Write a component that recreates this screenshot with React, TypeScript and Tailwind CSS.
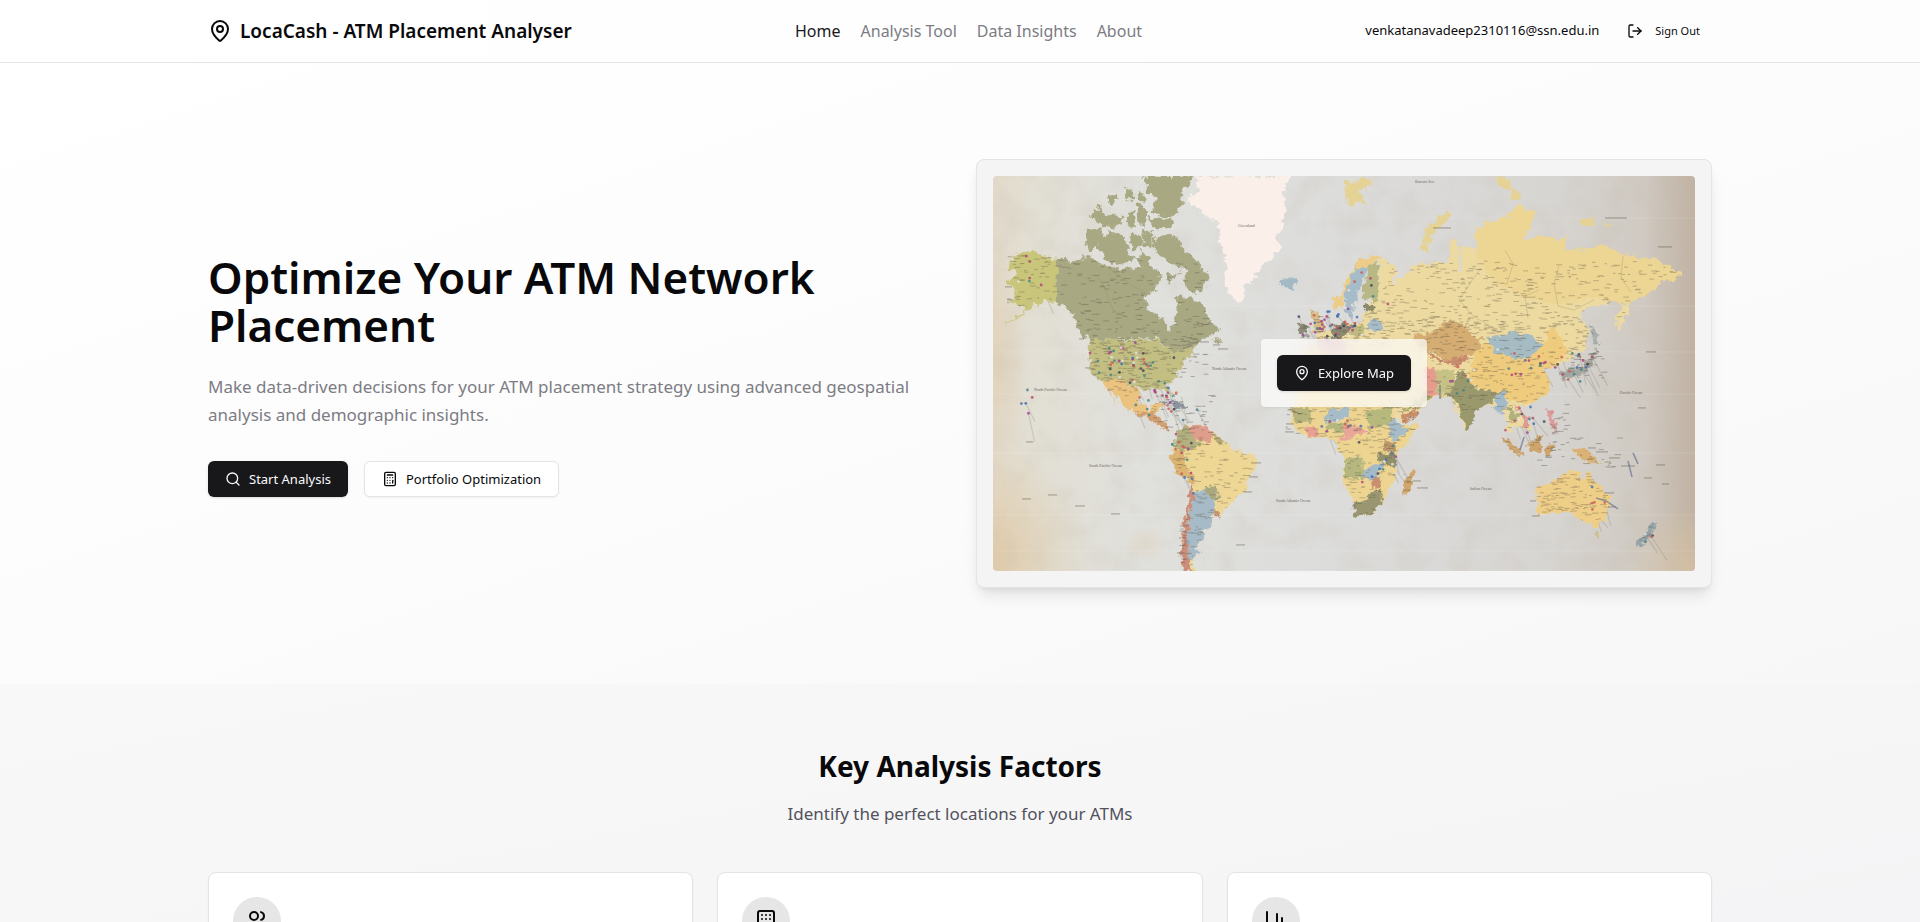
import { Building, Calculator, ChartColumn, LogOut, MapPin, Search, Users } from "lucide-react";

const LANDS: [string, string][] = [
  // North America
  ["#c9c67c", "35,75 49,80 64,82 64,126 52,124 40,131 27,141 12,149 30,137 34,131 17,127 24,117 13,104 24,99 15,91 20,81"],
  ["#a8a883", "64,82 77,86 94,80 110,89 127,93 144,92 157,91 169,97 164,111 152,122 154,132 170,144 177,156 181,147 185,137 184,119 199,122 210,131 217,144 226,154 215,160 207,166 194,174 177,176 164,162 97,164 87,156 80,137 64,126"],
  ["#c3bf83", "96,164 164,164 177,176 194,174 204,169 190,187 186,198 174,210 179,221 172,213 149,214 142,208 118,206 106,203 98,198 96,175"],
  ["#ebc37f", "110,205 120,204 134,206 144,212 147,227 157,234 165,227 170,229 160,239 144,237 129,229 120,214 117,217 124,227 114,214"],
  ["#d2a070", "144,236 160,237 172,247 177,256 169,252 160,244 145,240"],
  ["#8b939c", "164,228 180,224 190,229 195,233 183,231 176,228"],
  ["#a8a883", "149,0 199,0 189,17 187,31 180,41 164,39 159,34 164,24 154,17 154,7"],
  ["#a8a883", "155,42 179,43 177,52 159,52"],
  ["#a8a883", "132,12 140,14 140,24 134,24"],
  ["#a8a883", "144,16 150,17 152,26 145,24"],
  ["#a8a883", "114,24 124,17 120,29"],
  ["#a8a883", "99,39 107,29 110,41 129,39 130,47 114,52 104,46"],
  ["#a8a883", "134,39 140,34 142,49 134,51"],
  ["#a8a883", "145,26 154,34 150,51 145,41"],
  ["#a8a883", "94,54 109,52 110,62 100,74 93,72"],
  ["#a8a883", "105,64 117,56 132,61 135,77 144,84 120,89 107,77"],
  ["#a8a883", "137,57 147,59 149,71 139,74"],
  ["#a8a883", "149,54 160,57 159,71 150,71"],
  ["#a8a883", "147,74 157,81 154,94 145,87"],
  ["#a8a883", "164,59 185,61 190,74 204,84 214,99 209,117 199,116 190,106 194,94 177,87 164,77 160,67"],
  ["#a8a883", "172,96 184,101 190,92 177,107"],
  ["#a8a883", "220,161 231,164 226,169"],
  ["#fbefe9", "204,0 297,0 290,17 292,34 289,47 287,57 282,64 289,71 279,82 269,91 259,102 252,111 249,126 244,126 235,116 232,101 234,84 227,71 227,54 222,44 210,39 195,24 207,11"],
  ["#a3b9c6", "285,106 297,100 305,106 302,112 290,111"],
  // South America
  ["#eed795", "184,254 194,249 210,249 224,259 234,266 235,272 264,282 262,294 254,304 252,317 240,322 234,331 227,340 220,341 219,349 210,354 209,364 204,367 205,376 199,386 202,395 190,395 188,381 192,344 197,321 197,306 184,297 177,281 184,267"],
  ["#a6bbc7", "201,317 211,314 224,322 219,334 219,349 210,354 209,364 204,367 205,376 199,386 194,386 195,350"],
  ["#b2b07e", "184,254 194,249 202,262 209,268 190,275 180,272"],
  ["#dcb573", "180,275 192,275 190,285 200,300 205,310 197,306 184,297 177,281"],
  ["#df9d8b", "193,250 210,249 222,258 215,267 202,262"],
  ["#b5a873", "222,259 234,266 226,268"],
  ["#a9a87e", "213,308 222,312 226,322 220,324 212,314"],
  ["#c88f6f", "220,333 228,336 226,341 220,340"],
  ["#cb8d7c", "197,306 201,317 195,345 194,386 200,395 190,395 188,381 192,344 197,321"],
  // Eurasia
  ["#eddaa0", "387,81 405,94 399,109 414,97 422,89 444,86 457,87 457,67 464,64 465,81 464,97 469,94 467,71 480,71 485,77 482,57 494,46 514,42 524,29 542,37 540,49 527,66 550,59 567,64 572,59 574,74 594,74 607,69 627,77 640,82 660,82 677,91 687,99 682,106 667,102 665,112 647,122 635,127 635,137 625,154 623,141 634,124 627,119 614,129 597,129 585,141 597,154 592,171 580,181 570,187 562,190 550,194 557,204 555,217 539,227 524,231 529,241 539,249 537,256 522,249 519,257 514,251 512,237 504,229 492,229 480,237 472,254 467,241 457,222 444,219 437,222 424,237 409,246 397,231 385,215 370,212 360,200 345,178 335,192 308,192 310,172 328,168 322,160 335,155 352,148 370,145 376,127 384,116"],
  ["#edd593", "482,57 494,46 514,42 524,29 542,37 540,49 527,66 550,59 567,64 572,59 574,74 594,74 607,69 627,77 640,82 660,82 677,91 687,99 682,106 667,102 665,112 647,122 635,127 600,122 560,128 530,120 500,105 486,84"],
  ["#b8b886", "374,89 385,87 384,116 384,126 370,122 369,112 375,102"],
  ["#a6bcc8", "362,92 374,89 372,102 364,116 362,129 357,141 352,136 352,119 357,104"],
  ["#edcc88", "347,122 355,102 364,86 384,79 390,82 374,89 362,92 352,119 349,131 340,134 340,122"],
  ["#d9bd85", "317,134 325,136 329,146 332,156 319,157 322,147"],
  ["#8f8d7a", "306,148 314,148 314,157 306,156"],
  ["#8f8b72", "342,148 354,147 356,158 344,162 339,155"],
  ["#bdb980", "356,148 370,148 372,157 358,160"],
  ["#d8a5a8", "325,164 348,162 356,172 344,184 328,178"],
  ["#a6bcc8", "374,147 382,142 390,149 385,156 375,154"],
  ["#8d8a6c", "373,129 382,129 381,134 373,134"],
  ["#d5ad72", "420,159 440,157 444,151 459,144 475,151 477,159 490,162 484,176 470,179 454,186 440,174 434,176 424,167"],
  ["#efcb7e", "484,176 494,165 504,177 524,182 537,181 552,168 556,152 566,157 575,175 562,190 550,194 557,204 555,217 539,227 520,225 505,218 490,213 476,205 478,190"],
  ["#a5bcc4", "494,162 512,159 517,155 530,159 539,159 544,167 552,168 537,181 524,182 504,177"],
  ["#9a996d", "455,214 467,196 475,201 482,212 500,217 512,214 510,222 495,226 482,237 477,252 474,254 467,236 464,226 454,221"],
  ["#a3bac8", "504,219 512,216 515,229 510,239 500,234"],
  ["#b0b080", "515,229 524,237 522,246 517,243"],
  ["#dc9b94", "521,228 526,232 537,246 534,254 529,250 531,242"],
  ["#c98b6d", "434,176 454,186 470,179 477,182 464,191 440,182"],
  ["#e59c8c", "430,192 443,194 445,218 434,222"],
  ["#c6c185", "443,194 462,194 458,215 445,220"],
  ["#aaa66c", "437,222 424,230 410,235 430,217"],
  ["#c88f6b", "409,239 425,234 427,239 410,246"],
  ["#e5d295", "427,71 434,51 457,35 459,39 439,57 434,77"],
  ["#e5d295", "352,7 361,4 364,9 367,3 379,2 380,9 367,14 372,29 365,25 357,32"],
  ["#e5d295", "502,0 517,4 518,15 510,14"],
  ["#e5d295", "520,12 527,18 526,22 518,23"],
  ["#e5d295", "587,44 600,42 601,49 589,50"],
  ["#e5d295", "608,46 618,48 612,50"],
  ["#a5a69f", "567,195 577,193 590,190 598,178 604,174 600,186 594,198 578,202 568,205"],
  ["#a7adad", "597,150 604,158 606,170 601,166"],
  // Africa
  ["#edd591", "299,232 310,205 340,198 350,205 375,208 395,212 400,232 405,249 425,249 415,266 404,276 400,286 404,302 394,312 394,319 387,327 379,339 364,340 360,326 350,302 354,282 345,276 344,266 334,261 314,262 300,249 297,242"],
  ["#b6b37c", "299,233 316,232 320,246 304,247"],
  ["#a6bcc8", "337,234 357,232 355,242 330,246"],
  ["#b4b680", "335,246 354,247 350,257 335,254"],
  ["#e7a092", "314,251 325,252 324,261 314,261"],
  ["#e9a597", "352,251 359,248 377,256 362,260 347,266"],
  ["#b6b87e", "370,236 399,231 397,249 377,252"],
  ["#a6bcc8", "394,247 402,242 409,252 417,256 400,264"],
  ["#92906a", "384,277 404,279 402,291 387,286"],
  ["#bd986a", "392,264 404,266 400,277 390,275"],
  ["#b5b77f", "354,282 369,282 370,302 352,302"],
  ["#a3bac8", "370,294 390,287 384,304 370,302"],
  ["#c88f6f", "380,302 389,304 387,312 379,311"],
  ["#999671", "360,327 370,327 380,314 389,314 387,327 379,339 362,340"],
  ["#d1a66b", "412,301 420,294 421,301 415,319 410,317"],
  // Oceania
  ["#efcf88", "542,311 554,309 569,299 577,294 585,297 589,306 595,294 602,306 615,317 617,327 614,341 604,351 592,347 577,336 560,337 545,339 545,327"],
  ["#cdbd85", "600,358 608,357 605,362"],
  ["#96a4a7", "657,347 664,349 660,357 647,371 642,369 654,357"],
  ["#dab274", "577,272 594,274 607,289 590,284"],
  ["#cfa56e", "534,267 549,259 547,277 537,276"],
  ["#cfa56e", "507,259 527,274 530,282 517,272"],
  ["#cfa56e", "553,270 561,268 557,280 553,279"],
  ["#dd9d9d", "554,234 559,235 564,257 558,248"],
];

const PIN_COLORS = ["#b0406f", "#3d8389", "#3f6db0", "#cb5a55", "#3f4058", "#3d8389", "#9d4293", "#e4e4e4"];

// Pin clusters: centre x, centre y, spread x, spread y, count
const CLUSTERS: [number, number, number, number, number][] = [
  [40, 95, 20, 22, 6],
  [142, 186, 50, 28, 44],
  [166, 226, 42, 22, 28],
  [190, 265, 14, 18, 9],
  [196, 305, 10, 26, 6],
  [340, 149, 38, 18, 44],
  [375, 120, 30, 32, 8],
  [350, 250, 45, 12, 10],
  [385, 292, 24, 30, 12],
  [470, 205, 22, 24, 9],
  [535, 190, 44, 28, 16],
  [530, 245, 22, 22, 12],
  [582, 190, 20, 18, 18],
  [600, 325, 14, 18, 5],
  [655, 360, 14, 10, 4],
  [34, 226, 9, 14, 5],
];

// Areas dotted with place-name marks: x, y, width, height, count
const LABEL_AREAS: [number, number, number, number, number][] = [
  [14, 76, 50, 60, 45],
  [66, 84, 150, 90, 230],
  [90, 164, 125, 52, 260],
  [105, 205, 95, 55, 90],
  [176, 250, 90, 145, 260],
  [304, 134, 90, 64, 240],
  [385, 85, 300, 70, 400],
  [385, 145, 215, 90, 500],
  [296, 228, 134, 112, 370],
  [505, 228, 105, 60, 130],
  [540, 295, 78, 56, 140],
  [640, 345, 28, 28, 24],
];

// Coastal place names that run out over the sea
const COAST_AREAS: [number, number, number, number, number][] = [
  [160, 218, 60, 36, 34],
  [186, 176, 32, 26, 14],
  [300, 140, 36, 40, 22],
  [292, 232, 14, 30, 12],
  [575, 172, 34, 30, 26],
  [556, 226, 16, 34, 14],
  [536, 262, 90, 30, 34],
  [186, 340, 10, 50, 12],
  [12, 80, 20, 50, 9],
];

const OCEANS: [string, number, number][] = [
  ["North Pacific Ocean", 41, 215],
  ["South Pacific Ocean", 96, 291],
  ["North Atlantic Ocean", 219, 194],
  ["South Atlantic Ocean", 283, 326],
  ["Indian Ocean", 477, 314],
  ["Pacific Ocean", 627, 218],
  ["Greenland", 245, 51],
  ["Barents Sea", 422, 7],
];

function sequence(seed: number) {
  let s = seed;
  return () => {
    s = (s * 16807) % 2147483647;
    return s / 2147483647;
  };
}

function markPath(areas: [number, number, number, number, number][], rand: () => number) {
  return areas
    .flatMap(([x, y, w, h, n]) =>
      Array.from({ length: n }, () => {
        const mx = x + rand() * w;
        const my = y + rand() * h;
        return `M${mx.toFixed(1)} ${my.toFixed(1)}l${(2 + rand() * 5).toFixed(1)} ${(rand() * 0.6 - 0.3).toFixed(1)}`;
      }),
    )
    .join("");
}

function WorldMap() {
  const rand = sequence(4217);
  const marks = markPath(LABEL_AREAS, rand);
  const coastMarks = markPath(COAST_AREAS, rand);
  const pins = CLUSTERS.flatMap(([cx, cy, sx, sy, n]) =>
    Array.from({ length: n }, () => ({
      x: cx + (rand() + rand() - 1) * sx,
      y: cy + (rand() + rand() - 1) * sy,
      color: PIN_COLORS[Math.floor(rand() * PIN_COLORS.length)],
    })),
  );
  return (
    <svg viewBox="0 0 702 395" preserveAspectRatio="xMidYMid slice" className="block h-full w-full" role="img" aria-label="World map">
      <defs>
        <linearGradient id="sea" x1="0" x2="1" y1="0" y2="0">
          <stop offset="0" stopColor="#e3dacb" />
          <stop offset="0.06" stopColor="#e2dfd4" />
          <stop offset="0.2" stopColor="#e0e0dc" />
          <stop offset="0.5" stopColor="#dcdcdb" />
          <stop offset="0.8" stopColor="#d7d5d2" />
          <stop offset="0.93" stopColor="#cfc9c1" />
          <stop offset="1" stopColor="#c1b2a3" />
        </linearGradient>
        <radialGradient id="stain">
          <stop offset="0" stopColor="#dfc7a1" stopOpacity="0.75" />
          <stop offset="1" stopColor="#dfc7a1" stopOpacity="0" />
        </radialGradient>
        <filter id="coast" x="-2%" y="-2%" width="104%" height="104%">
          <feTurbulence type="fractalNoise" baseFrequency="0.16" numOctaves="3" seed="8" />
          <feDisplacementMap in="SourceGraphic" scale="10" xChannelSelector="R" yChannelSelector="G" />
        </filter>
        <filter id="paper" x="0" y="0" width="100%" height="100%">
          <feTurbulence type="fractalNoise" baseFrequency="0.035" numOctaves="5" seed="3" />
          <feColorMatrix values="0 0 0 0 0.55  0 0 0 0 0.48  0 0 0 0 0.38  0.9 0 0 0 -0.4" />
        </filter>
        <clipPath id="land">
          {LANDS.map(([, points], i) => (
            <polygon key={i} points={points} />
          ))}
        </clipPath>
      </defs>
      <rect width="702" height="395" fill="url(#sea)" />
      <ellipse cx="0" cy="380" rx="95" ry="110" fill="url(#stain)" />
      <ellipse cx="0" cy="180" rx="35" ry="120" fill="url(#stain)" opacity="0.5" />
      <ellipse cx="152" cy="368" rx="22" ry="20" fill="url(#stain)" opacity="0.4" />
      <ellipse cx="700" cy="390" rx="70" ry="60" fill="url(#stain)" opacity="0.7" />
      <rect width="702" height="395" filter="url(#paper)" opacity="0.45" />
      <path d="M0 277H702M0 218H702M0 176H702M0 42H702M0 130H702M0 339H702M0 375H702" stroke="#fff" strokeWidth="0.5" opacity="0.22" />
      <g stroke="#77756f" strokeWidth="1.3" opacity="0.22">
        {pins
          .filter((_, i) => i % 2 === 0)
          .map((p, i) => (
            <path key={i} d={`M${p.x} ${p.y}l${6 + (i % 4) * 3} ${18 + (i % 3) * 5}`} strokeLinecap="round" />
          ))}
      </g>
      <g filter="url(#coast)" strokeWidth="0.4">
        {LANDS.map(([fill, points], i) => (
          <polygon key={i} points={points} fill={fill} stroke={fill} />
        ))}
      </g>
      <path
        d="M104 100l8 12 8 22 14 8M118 94l22 16 14 8M488 92l-10 14 -12 18 14 16 20 12M512 74l8 14 -6 20 -16 -2M535 142l-3 -22 14 -6M566 90l-5 18 4 22 16 4 20 -10M630 80l-2 22 10 14"
        fill="none"
        stroke="#8e8968"
        strokeWidth="0.5"
        opacity="0.6"
      />
      <path d={marks} clipPath="url(#land)" stroke="#5c5444" strokeWidth="0.6" opacity="0.58" />
      <path d={coastMarks} stroke="#5c5449" strokeWidth="0.7" opacity="0.6" />
      <path
        d="M12 111h7M14 124h6M310 160h7M86 163h5M92 192h6M207 166h9M225 173h10M220 169h7M258 287h10M256 301h9M251 316h8M187 350h7M186 362h7M184 377h7M293 248h8M292 256h9M424 312h11M420 305h8M537 325h6M539 340h8M611 317h10M615 331h8M603 276h12M616 282h11M628 290h14M651 302h8M663 289h9M669 308h7M29 323h9M55 319h9M82 330h10M118 338h9M33 266h7M243 369h9M612 42h22M440 52h18M665 71h14M653 176h10M645 232h8M595 272h8"
        stroke="#5c5649"
        strokeWidth="0.8"
        opacity="0.65"
      />
      <g fill="#6d675e" fontSize="4" fontFamily="'Liberation Serif', serif">
        {OCEANS.map(([name, x, y]) => (
          <text key={name} x={x} y={y}>
            {name}
          </text>
        ))}
      </g>
      {pins.map((p, i) => (
        <circle key={i} cx={p.x} cy={p.y} r="1.4" fill={p.color} opacity="0.8" />
      ))}
      <path d="M640 277l5 11M635 285l4 16M603 322l10 3 12 8M527 274l4 -13M447 209v14" stroke="#6c7691" strokeWidth="1.6" fill="none" opacity="0.7" />
    </svg>
  );
}

const NAV = ["Home", "Analysis Tool", "Data Insights", "About"];
const FACTORS = [
  { name: "Population", Icon: Users },
  { name: "Commercial Activity", Icon: Building },
  { name: "Statistics", Icon: ChartColumn },
];

export default function App() {
  return (
    <div className="h-screen overflow-x-hidden overflow-y-auto bg-white font-['Noto_Sans',sans-serif] text-zinc-950 [scrollbar-width:none]">
      <header className="border-b border-zinc-200 bg-linear-to-r from-white to-[#fdfdfd]">
        <div className="mx-auto flex h-[62px] max-w-screen-2xl items-center justify-between px-4">
          <a href="#home" className="flex items-center gap-2">
            <MapPin size={24} strokeWidth={2} />
            <span className="text-[19px] leading-7 font-semibold">LocaCash - ATM Placement Analyser</span>
          </a>
          <nav className="flex items-center gap-5">
            {NAV.map((item, i) => (
              <a key={item} href="#" className={i === 0 ? "text-zinc-900" : "text-[#7c7c84]"}>
                {item}
              </a>
            ))}
          </nav>
          <div className="flex items-center gap-4">
            <span className="text-[13px]">venkatanavadeep2310116@ssn.edu.in</span>
            <button className="flex h-8 items-center gap-3 rounded-md px-3 text-[11px]">
              <LogOut size={16} />
              Sign Out
            </button>
          </div>
        </div>
      </header>

      <main>
        <section className="bg-linear-to-br from-white via-[#fcfcfc] to-[#f7f7f8] py-24">
          <div className="mx-auto grid max-w-screen-2xl grid-cols-2 items-center gap-8 px-4">
            <div className="pt-1">
              <h1 className="text-[44px] leading-12 font-semibold">Optimize Your ATM Network Placement</h1>
              <p className="mt-6 text-[17px] leading-7 text-[#7c7c84]">
                Make data-driven decisions for your ATM placement strategy using advanced geospatial analysis and
                demographic insights.
              </p>
              <div className="mt-8 flex gap-4">
                <button className="flex h-9 items-center gap-2 rounded-md bg-zinc-900 px-[17px] text-[13px] text-zinc-50 shadow-sm">
                  <Search size={16} />
                  Start Analysis
                </button>
                <button className="flex h-9 items-center gap-2 rounded-md border border-zinc-200 bg-white px-[17px] text-[13px] shadow-xs">
                  <Calculator size={16} />
                  Portfolio Optimization
                </button>
              </div>
            </div>
            <div className="rounded-lg border border-zinc-200 bg-[#f4f4f4] p-4 shadow-lg">
              <div className="relative aspect-video overflow-hidden rounded">
                <WorldMap />
                <div className="absolute inset-0 flex items-center justify-center">
                  <div className="rounded bg-white/70 p-4 shadow-xs backdrop-blur-sm">
                    <button className="flex h-9 items-center gap-2 rounded-md bg-zinc-900 px-[17px] text-[13px] text-zinc-50 shadow-sm">
                      <MapPin size={16} />
                      Explore Map
                    </button>
                  </div>
                </div>
              </div>
            </div>
          </div>
        </section>

        <section className="bg-linear-to-br from-[#f8f8f8] via-[#f6f6f7] to-[#f3f3f5] py-16">
          <div className="mx-auto max-w-screen-2xl px-4">
            <div className="mb-11 text-center">
              <h2 className="text-[28px] leading-9 font-bold">Key Analysis Factors</h2>
              <p className="mt-4 text-[17px] leading-7 text-zinc-600">Identify the perfect locations for your ATMs</p>
            </div>
            <div className="grid grid-cols-3 gap-6">
              {FACTORS.map(({ name, Icon }) => (
                <article key={name} className="rounded-lg border border-zinc-200 bg-white p-6 shadow-xs">
                  <div className="flex size-12 items-center justify-center rounded-full bg-[#e6e6e6]">
                    <Icon size={24} />
                  </div>
                </article>
              ))}
            </div>
          </div>
        </section>
      </main>
    </div>
  );
}
